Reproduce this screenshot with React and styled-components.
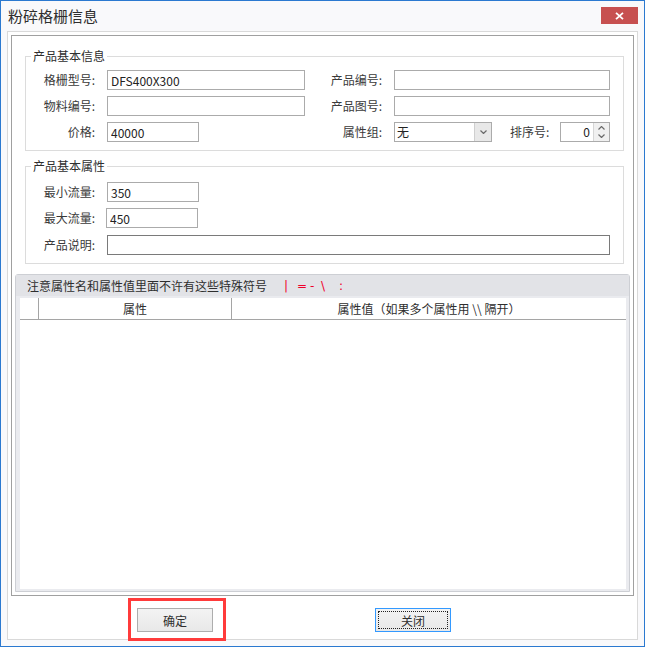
import React from "react";
import styled, { createGlobalStyle } from "styled-components";

const FONT = `"Noto Sans CJK SC", "Microsoft YaHei", "Liberation Sans", sans-serif`;

const GlobalStyle = createGlobalStyle`
  html, body {
    margin: 0;
    padding: 0;
  }
  body {
    font-family: ${FONT};
    font-size: 12px;
    color: #333;
    background: #fff;
  }
  *, *::before, *::after {
    box-sizing: border-box;
  }
`;

const RED_SYMBOLS = [
  { ch: "|", w: 13 },
  { ch: "=", w: 13 },
  { ch: "-", w: 11 },
  { ch: "\\", w: 18 },
  { ch: ":", w: 8 },
];

const ChevronDown = ({ size = 7 }) => (
  <svg width={size} height={size - 3} viewBox="0 0 7 4">
    <polyline points="0.5,0.5 3.5,3.5 6.5,0.5" fill="none" stroke="#6a6a6a" strokeWidth="1.2" />
  </svg>
);

const ChevronUp = () => (
  <svg width="7" height="4" viewBox="0 0 7 4">
    <polyline points="0.5,3.5 3.5,0.5 6.5,3.5" fill="none" stroke="#6a6a6a" strokeWidth="1.2" />
  </svg>
);

const App = () => {
  return (
    <>
      <GlobalStyle />
      <Window>
        <TitleBar>
          <Title>粉碎格栅信息</Title>
          <CloseButton aria-label="关闭窗口">
            <svg width="9" height="8" viewBox="0 0 9 8">
              <path d="M1 0.8 L8 7.2 M8 0.8 L1 7.2" stroke="#fff" strokeWidth="1.8" />
            </svg>
          </CloseButton>
        </TitleBar>

        <Client>
          <Frame>
            <Group $mt={13} $pt={7}>
              <Legend>产品基本信息</Legend>
              <Rows>
                <FormRow>
                  <Label>格栅型号:</Label>
                  <TextBox $w={198} defaultValue="DFS400X300" />
                  <Label>产品编号:</Label>
                  <TextBox $w={216} />
                </FormRow>
                <FormRow>
                  <Label>物料编号:</Label>
                  <TextBox $w={198} />
                  <Label>产品图号:</Label>
                  <TextBox $w={216} />
                </FormRow>
                <FormRow>
                  <Label>价格:</Label>
                  <TextBox $w={92} defaultValue="40000" />
                  <Label>属性组:</Label>
                  <ComboCell>
                    <Select>
                      <SelectValue>无</SelectValue>
                      <DropButton>
                        <ChevronDown />
                      </DropButton>
                    </Select>
                    <SortLabel>排序号:</SortLabel>
                    <Spinner>
                      <SpinValue>0</SpinValue>
                      <SpinButtons>
                        <ChevronUp />
                        <ChevronDown />
                      </SpinButtons>
                    </Spinner>
                  </ComboCell>
                </FormRow>
              </Rows>
            </Group>

            <Group $mt={8} $pt={9}>
              <Legend>产品基本属性</Legend>
              <Rows>
                <FormRow>
                  <Label>最小流量:</Label>
                  <TextBox $w={92} defaultValue="350" />
                </FormRow>
                <FormRow>
                  <Label>最大流量:</Label>
                  <TextBox $w={92} $shift={-1} defaultValue="450" />
                </FormRow>
                <FormRow $nudge={1}>
                  <Label>产品说明:</Label>
                  <TextBox $wide $dark />
                </FormRow>
              </Rows>
            </Group>

            <Panel>
              <PanelHeader>
                注意属性名和属性值里面不许有这些特殊符号
                <Symbols>
                  {RED_SYMBOLS.map((s) => (
                    <Symbol key={s.ch} $w={s.w}>
                      {s.ch}
                    </Symbol>
                  ))}
                </Symbols>
              </PanelHeader>
              <Grid>
                <GridHead>
                  <HeadCell />
                  <HeadCell>属性</HeadCell>
                  <HeadCell $last>属性值（如果多个属性用 \\ 隔开）</HeadCell>
                </GridHead>
              </Grid>
            </Panel>
          </Frame>

          <Footer>
            <Highlight>
              <Button>确定</Button>
            </Highlight>
            <Button $focused>关闭</Button>
          </Footer>
        </Client>
      </Window>
    </>
  );
};

const Window = styled.div`
  width: 645px;
  height: 647px;
  border: 1px solid #2b79d0;
  background: #f9f9fb;
  display: flex;
  flex-direction: column;
`;

const TitleBar = styled.div`
  height: 30px;
  flex-shrink: 0;
  display: flex;
  align-items: flex-start;
  justify-content: space-between;
  padding: 0 6px 0 7px;
`;

const Title = styled.div`
  margin-top: 5px;
  font-size: 15px;
  line-height: 20px;
  color: #2e2e2e;
`;

const CloseButton = styled.button`
  margin-top: 6px;
  width: 37px;
  height: 17px;
  padding: 0;
  border: none;
  background: #c75050;
  display: flex;
  align-items: center;
  justify-content: center;
`;

const Client = styled.div`
  margin: 0 6px 6px 6px;
  height: 609px;
  border: 1px solid #d9d9d9;
  background: #fff;
  padding: 3px 3px 0 3px;
  display: flex;
  flex-direction: column;
`;

const Frame = styled.div`
  height: 561px;
  flex-shrink: 0;
  border: 1px solid #a0a0a0;
  display: flex;
  flex-direction: column;
`;

const Group = styled.fieldset`
  margin: ${(p) => p.$mt}px 9px 0 13px;
  padding: ${(p) => p.$pt}px 13px 8px 0;
  border: 1px solid #dcdcdc;
  min-width: 0;
`;

const Legend = styled.legend`
  margin-left: 5px;
  padding: 0 2px;
  font-size: 12px;
  line-height: 14px;
  color: #2e2e2e;
`;

const Rows = styled.div`
  display: flex;
  flex-direction: column;
  gap: 6px;
`;

const FormRow = styled.div`
  display: grid;
  grid-template-columns: 73px 198px 73px 216px;
  column-gap: 8px;
  align-items: center;
  height: 20px;
  margin-top: ${(p) => p.$nudge || 0}px;
`;

const Label = styled.label`
  text-align: right;
  padding-right: 4px;
  font-size: 12px;
  line-height: 16px;
  color: #3a3a3a;
  white-space: nowrap;
`;

const TextBox = styled.input.attrs({ type: "text", readOnly: true })`
  width: ${(p) => (p.$wide ? "100%" : `${p.$w}px`)};
  grid-column: ${(p) => (p.$wide ? "2 / -1" : "auto")};
  margin-left: ${(p) => p.$shift || 0}px;
  height: 20px;
  padding: 0 3px;
  border: 1px solid ${(p) => (p.$dark ? "#7a7a7a" : "#ababab")};
  background: #fff;
  font-family: ${FONT};
  font-size: 12px;
  color: #222;
  outline: none;
`;

const ComboCell = styled.div`
  display: flex;
  align-items: center;
  height: 20px;
`;

const Select = styled.div`
  width: 98px;
  height: 20px;
  border: 1px solid #ababab;
  display: flex;
  background: #fff;
`;

const SelectValue = styled.span`
  flex: 1;
  padding-left: 2px;
  line-height: 18px;
  font-size: 12px;
  color: #222;
`;

const DropButton = styled.span`
  width: 17px;
  border-left: 1px solid #cfcfcf;
  background: #e8e8e8;
  display: flex;
  align-items: center;
  justify-content: center;
`;

const SortLabel = styled.span`
  margin-left: 18px;
  font-size: 12px;
  line-height: 16px;
  color: #3a3a3a;
`;

const Spinner = styled.div`
  margin-left: auto;
  width: 50px;
  height: 20px;
  border: 1px solid #ababab;
  display: flex;
  background: #fff;
`;

const SpinValue = styled.span`
  flex: 1;
  text-align: right;
  padding-right: 3px;
  line-height: 18px;
  font-size: 12px;
  color: #222;
`;

const SpinButtons = styled.span`
  width: 16px;
  border-left: 1px solid #d6d6d6;
  background: #f0f0f0;
  display: flex;
  flex-direction: column;
  align-items: center;
  justify-content: space-evenly;
`;

const Panel = styled.div`
  flex: 1;
  margin: 10px 3px 3px 3px;
  border: 1px solid #cdcfd4;
  border-radius: 3px 3px 0 0;
  background: #eaebef;
  display: flex;
  flex-direction: column;
`;

const PanelHeader = styled.div`
  height: 21px;
  padding-left: 11px;
  background: #e2e3e7;
  display: flex;
  align-items: center;
  font-size: 12px;
  color: #2e2e2e;
  white-space: nowrap;
`;

const Symbols = styled.span`
  margin-left: 17px;
  display: inline-flex;
`;

const Symbol = styled.span`
  width: ${(p) => p.$w}px;
  color: #f0002a;
  font-family: "DejaVu Sans", sans-serif;
  font-size: 12px;
`;

const Grid = styled.div`
  flex: 1;
  margin: 2px 3px 2px 4px;
  background: #fff;
  display: flex;
  flex-direction: column;
`;

const GridHead = styled.div`
  display: grid;
  grid-template-columns: 19px 193px 1fr;
  height: 22px;
  border-bottom: 1px solid #a5a5a5;
`;

const HeadCell = styled.div`
  border-right: ${(p) => (p.$last ? "none" : "1px solid #a5a5a5")};
  text-align: center;
  line-height: 21px;
  font-size: 12px;
  color: #2e2e2e;
  white-space: nowrap;
`;

const Footer = styled.div`
  height: 43px;
  padding: 12px 0 0 126px;
  display: flex;
  align-items: flex-start;
  gap: 162px;
`;

const Highlight = styled.span`
  position: relative;
  display: inline-flex;

  &::after {
    content: "";
    position: absolute;
    left: -9px;
    top: -10px;
    width: 98px;
    height: 43px;
    border: 3px solid #ff3b3b;
    pointer-events: none;
  }
`;

const Button = styled.button`
  width: 76px;
  height: 24px;
  padding: 0;
  border: 1px solid ${(p) => (p.$focused ? "#3399ff" : "#adadad")};
  background: linear-gradient(#f3f3f3, #e8e8e8);
  font-family: ${FONT};
  font-size: 12px;
  color: #2e2e2e;
  outline: ${(p) => (p.$focused ? "1px dotted #222" : "none")};
  outline-offset: -4px;
`;

export default App;
